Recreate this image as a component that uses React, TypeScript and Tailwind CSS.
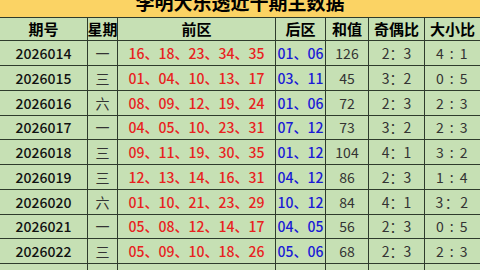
import { FC } from "react";

// 近十期数据, 最后一行只露出顶边
interface Draw {
  issue: string;
  week: string;
  front: string;
  back: string;
  sum: string;
  oddEven: string;
  bigSmall: string;
}

const draws: Draw[] = [
  { issue: "2026014", week: "一", front: "16、18、23、34、35", back: "01、06", sum: "126", oddEven: "2：3", bigSmall: "4 : 1" },
  { issue: "2026015", week: "三", front: "01、04、10、13、17", back: "03、11", sum: "45", oddEven: "3：2", bigSmall: "0 : 5" },
  { issue: "2026016", week: "六", front: "08、09、12、19、24", back: "01、06", sum: "72", oddEven: "2：3", bigSmall: "2 : 3" },
  { issue: "2026017", week: "一", front: "04、05、10、23、31", back: "07、12", sum: "73", oddEven: "3：2", bigSmall: "2 : 3" },
  { issue: "2026018", week: "三", front: "09、11、19、30、35", back: "01、12", sum: "104", oddEven: "4：1", bigSmall: "3 : 2" },
  { issue: "2026019", week: "三", front: "12、13、14、16、31", back: "04、12", sum: "86", oddEven: "2：3", bigSmall: "1 : 4" },
  { issue: "2026020", week: "六", front: "01、10、21、23、29", back: "10、12", sum: "84", oddEven: "4：1", bigSmall: "3：2" },
  { issue: "2026021", week: "一", front: "05、08、12、14、17", back: "04、05", sum: "56", oddEven: "2：3", bigSmall: "0 : 5" },
  { issue: "2026022", week: "三", front: "05、09、10、18、26", back: "05、06", sum: "68", oddEven: "2：3", bigSmall: "2 : 3" },
  { issue: "", week: "", front: "", back: "", sum: "", oddEven: "", bigSmall: "" },
];

const headers = ["期号", "星期", "前区", "后区", "和值", "奇偶比", "大小比"];

const cell = "flex items-center justify-center bg-[#c6e0b4] whitespace-nowrap";

const App: FC = () => {
  return (
    <div
      className="h-[270px] w-[480px] overflow-hidden bg-[#2e3b2c]"
      style={{ fontFamily: '"Noto Sans CJK SC", "Noto Sans", sans-serif' }}
    >
      <div className="grid grid-cols-[87px_29px_157px_49px_42px_55px_1fr] grid-rows-[17px_22px_24px_24px_24px_23px_24px_24px_24px_23px_24px_24px] gap-px">
        {/* 标题栏, 上半截被截掉 */}
        <div className="col-span-7 flex justify-center overflow-hidden bg-[#fbd364]">
          <span className="mt-[-8px] text-[19px] font-bold leading-none text-black">
            李明大乐透近十期主数据
          </span>
        </div>

        {headers.map((h) => (
          <div key={h} className={`${cell} text-[15px] font-bold text-black`}>
            {h}
          </div>
        ))}

        {draws.map((d, i) => (
          <div key={i} className="contents">
            <div className={`${cell} text-[14px] font-medium text-[#111]`}>{d.issue}</div>
            <div className={`${cell} text-[14px] text-[#333]`}>{d.week}</div>
            <div className={`${cell} text-[14px] font-medium text-[#e8221e]`}>{d.front}</div>
            <div className={`${cell} text-[14px] font-medium text-[#1a1ad6]`}>{d.back}</div>
            <div className={`${cell} text-[14px] text-[#333]`}>{d.sum}</div>
            <div className={`${cell} text-[14px] text-[#333]`}>{d.oddEven}</div>
            <div className={`${cell} text-[14px] tracking-[1.5px] text-[#333]`}>{d.bigSmall}</div>
          </div>
        ))}
      </div>
    </div>
  );
};

export default App;
